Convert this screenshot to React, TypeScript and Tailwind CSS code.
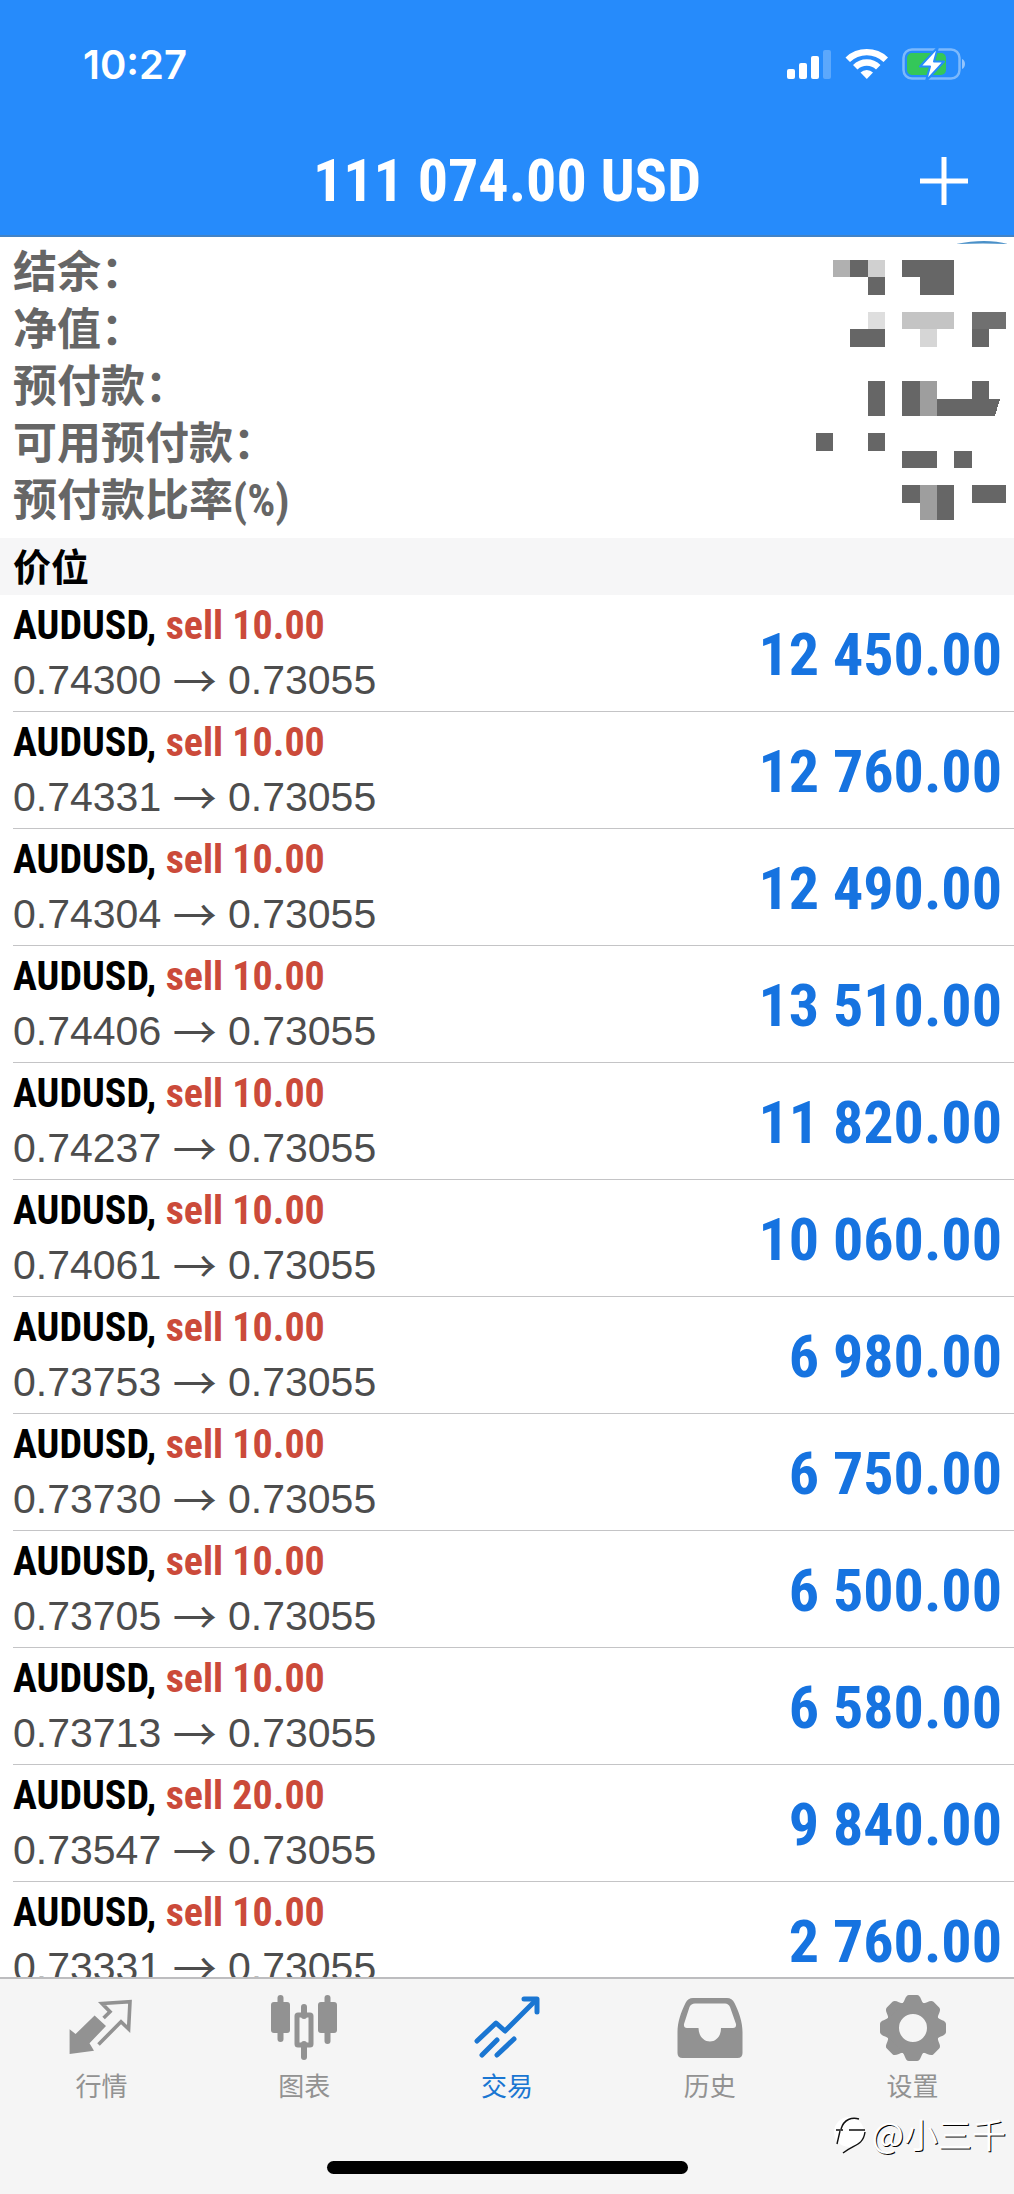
import React from "react";

const condensed = "font-['Roboto_Condensed','Liberation_Sans',sans-serif] font-bold";
const cjk = "font-['Noto_Sans_CJK_SC',sans-serif]";

const positions = [
  { open: "0.74300", lots: "10.00", profit: "12 450.00" },
  { open: "0.74331", lots: "10.00", profit: "12 760.00" },
  { open: "0.74304", lots: "10.00", profit: "12 490.00" },
  { open: "0.74406", lots: "10.00", profit: "13 510.00" },
  { open: "0.74237", lots: "10.00", profit: "11 820.00" },
  { open: "0.74061", lots: "10.00", profit: "10 060.00" },
  { open: "0.73753", lots: "10.00", profit: "6 980.00" },
  { open: "0.73730", lots: "10.00", profit: "6 750.00" },
  { open: "0.73705", lots: "10.00", profit: "6 500.00" },
  { open: "0.73713", lots: "10.00", profit: "6 580.00" },
  { open: "0.73547", lots: "20.00", profit: "9 840.00" },
  { open: "0.73331", lots: "10.00", profit: "2 760.00" },
];

function StatusIcons() {
  return (
    <svg width="182" height="34" viewBox="0 0 182 34" aria-hidden="true">
      <g fill="#fff">
        <rect x="1" y="21" width="8" height="10" rx="2" />
        <rect x="13" y="15" width="8" height="16" rx="2" />
        <rect x="25" y="8" width="8" height="23" rx="2" />
        <rect x="37" y="2" width="8" height="29" rx="2" opacity=".25" />
        <path d="M59.500 9.500A30.500 30.500 0 0 1 102 9.500L97.500 14A24 24 0 0 0 64 14Z" />
        <path d="M67 17A19.500 19.500 0 0 1 94.500 17L90 21.500A13.500 13.500 0 0 0 71.500 21.500Z" />
        <path d="M74.500 24.500A9 9 0 0 1 87 24.500L80.800 31Z" />
      </g>
      <rect x="117.500" y="1.500" width="56" height="29" rx="8.500" fill="none" stroke="#fff" strokeOpacity=".4" strokeWidth="2.500" />
      <path d="M176 11c4 1.500 4 8.500 0 10Z" fill="#fff" opacity=".5" />
      <rect x="121" y="5" width="39" height="22" rx="5" fill="#34c759" />
      <path d="M152 -1L134 18.500H144L140 33L158 13.500H148L152 -1Z" fill="#fff" stroke="#268bfb" strokeWidth="2" strokeLinejoin="round" />
    </svg>
  );
}

/* Pixelated cover over the private account figures. */
function Mosaic() {
  const cells: [number, number, number, number, string][] = [
    [17, 0, 17, 17, "#b0b0b0"], [34, 0, 18, 17, "#666"], [52, 0, 17, 17, "#d0d0d0"], [52, 17, 17, 18, "#666"],
    [86, 0, 52, 17, "#666"], [104, 17, 34, 18, "#666"],
    [52, 52, 17, 17, "#dedede"], [34, 69, 35, 18, "#666"], [86, 52, 52, 17, "#c4c4c4"], [104, 69, 17, 18, "#d6d6d6"],
    [156, 52, 34, 17, "#707070"], [156, 69, 17, 18, "#666"],
    [52, 121, 17, 35, "#666"], [86, 121, 18, 35, "#666"], [104, 121, 17, 35, "#9e9e9e"], [156, 121, 17, 18, "#666"],
    [0, 173, 17, 18, "#666"], [52, 173, 17, 18, "#666"], [86, 191, 35, 17, "#666"], [138, 191, 18, 17, "#666"],
    [86, 225, 18, 18, "#666"], [104, 225, 17, 35, "#9e9e9e"], [121, 225, 17, 35, "#666"], [156, 225, 34, 18, "#666"],
  ];
  return (
    <svg width="190" height="260" viewBox="0 0 190 260" shapeRendering="crispEdges" aria-hidden="true">
      {cells.map(([x, y, w, h, fill], i) => (
        <rect key={i} x={x} y={y} width={w} height={h} fill={fill} />
      ))}
      <path d="M121 139H184L179 156H121Z" fill="#666" />
    </svg>
  );
}

function QuotesIcon() {
  return (
    <svg width="66" height="66" viewBox="0 0 66 66" aria-hidden="true">
      <path d="M26.600 20.500L38 31L21.500 48.300L26 55.700L1.600 59V34.300L7.600 39Z" fill="#929292" />
      <path d="M35.600 23L42 16.700L34 8.500L62 6.700L60.600 34L53 26.700L30.500 49.500" fill="none" stroke="#929292" strokeWidth="3.600" />
    </svg>
  );
}

function ChartIcon() {
  return (
    <svg width="66" height="66" viewBox="0 0 66 66" fill="#929292" aria-hidden="true">
      <rect x="6.500" y="0" width="6" height="47" rx="3" />
      <rect x="0" y="7" width="19" height="31" rx="3" />
      <rect x="30" y="9" width="6" height="15" rx="3" />
      <rect x="30" y="46" width="6" height="19" rx="3" />
      <rect x="26" y="20" width="14" height="30" rx="1" fill="none" stroke="#929292" strokeWidth="5" />
      <rect x="53.500" y="0" width="6" height="49" rx="3" />
      <rect x="47" y="7" width="19" height="31" rx="3" />
    </svg>
  );
}

function TradeIcon() {
  return (
    <svg width="66" height="66" viewBox="0 0 66 66" fill="none" stroke="#1a76d2" strokeWidth="5" strokeLinecap="round" strokeLinejoin="round" aria-hidden="true">
      <path d="M3 46L22 28L31 36L62 5" />
      <path d="M50 4H63V17" />
      <path d="M8 60L23 45M23 60L40 44" />
    </svg>
  );
}

function HistoryIcon() {
  return (
    <svg width="66" height="66" viewBox="0 0 66 66" aria-hidden="true">
      <path fillRule="evenodd" fill="#929292" d="M16 3H50Q55 3 57.500 8C62 17 65.500 27 65.500 37V58Q65.500 63 60.500 63H5.500Q.500 63 .500 58V37C.500 27 4 17 8.500 8Q11 3 16 3ZM18 8.500Q14 8.500 12.500 12L7 29Q6.500 33 10 33H21.500C22 51 44 51 44 33H56Q59.500 33 59 29L53 12Q51.500 8.500 48 8.500Z" />
    </svg>
  );
}

function SettingsIcon() {
  return (
    <svg width="66" height="66" viewBox="-33 -33 66 66" aria-hidden="true">
      <g fill="#929292">
        <circle r="20.500" fill="none" stroke="#929292" strokeWidth="13" />
        {[0, 45, 90, 135, 180, 225, 270, 315].map((a) => (
          <path key={a} transform={`rotate(${a})`} d="M-11 -24C-8 -26 -8 -33 -4 -33H4C8 -33 8 -26 11 -24Z" />
        ))}
      </g>
    </svg>
  );
}

const tabs = [
  { label: "行情", Icon: QuotesIcon, active: false },
  { label: "图表", Icon: ChartIcon, active: false },
  { label: "交易", Icon: TradeIcon, active: true },
  { label: "历史", Icon: HistoryIcon, active: false },
  { label: "设置", Icon: SettingsIcon, active: false },
];

export default function App() {
  return (
    <div className="flex h-screen flex-col overflow-hidden bg-white">
      <header className="shrink-0 border-b-2 border-[#4283c6] bg-[#268bfb] text-white">
        <div className="flex h-[130px] items-center justify-between pr-[46px] pl-[83px]">
          <time className="font-['Inter',sans-serif] text-[40px] leading-none font-semibold">10:27</time>
          <StatusIcons />
        </div>
        <div className="grid h-[105px] grid-cols-[1fr_auto_1fr] items-center px-[46px] pb-1">
          <h1 className={`col-start-2 text-[60px] leading-none ${condensed}`}>111 074.00 USD</h1>
          <button type="button" aria-label="新订单" className="justify-self-end">
            <svg width="48" height="48" viewBox="0 0 48 48" stroke="#fff" strokeWidth="5" aria-hidden="true">
              <path d="M24 0V48M0 24H48" />
            </svg>
          </button>
        </div>
      </header>

      <section className="relative flex shrink-0 items-start justify-between py-2 pr-2 pl-[13px]">
        <svg className="absolute top-1 right-1" width="54" height="4" viewBox="0 0 54 4" aria-hidden="true">
          <path d="M0 3Q30 -3 52 3Q28 2 0 3Z" fill="#4a90c8" />
        </svg>
        <ul className="font-['Roboto_Condensed','Noto_Sans_CJK_SC',sans-serif] text-[44px] leading-[57px] font-bold text-[#666]">
          <li>结余：</li>
          <li>净值：</li>
          <li>预付款：</li>
          <li>可用预付款：</li>
          <li>预付款比率(%)</li>
        </ul>
        <div className="pt-[15px]"><Mosaic /></div>
      </section>

      <h2 className={`h-[57px] shrink-0 bg-[#f6f6f7] pl-[13px] text-[38px] leading-[54px] font-bold text-black ${cjk}`}>价位</h2>

      <ul className="min-h-0 flex-1 overflow-hidden pl-[13px]">
        {positions.map((p) => (
          <li key={p.open} className="flex h-[117px] items-center justify-between border-b border-[#c4c4c6] pr-3">
            <div>
              <p className={`text-[40px] leading-[54px] text-black ${condensed}`}>
                AUDUSD, <span className="text-[#cb4a3a]">sell {p.lots}</span>
              </p>
              <p className="h-[54px] font-['Liberation_Sans',sans-serif] text-[41px] leading-[54px] text-[#4d4d4d]">
                {p.open} <span className={`inline-block pb-2 align-middle text-[44px] leading-none ${cjk}`}>→</span> 0.73055
              </p>
            </div>
            <strong className={`pt-1 text-[60px] leading-none text-[#1673e0] ${condensed}`}>{p.profit}</strong>
          </li>
        ))}
      </ul>

      <footer className="relative shrink-0 border-t-2 border-[#bdbdbf] bg-[#f5f5f5] pb-5">
        <nav className="grid grid-cols-5 pt-4">
          {tabs.map(({ label, Icon, active }) => (
            <button key={label} type="button" className={`flex flex-col items-center gap-2 ${active ? "text-[#1a76d2]" : "text-[#929292]"}`}>
              <Icon />
              <span className={`text-[26px] leading-8 ${cjk}`}>{label}</span>
            </button>
          ))}
        </nav>
        <div className="mx-auto mt-[60px] h-[13px] w-[361px] rounded-full bg-black" />
        <p className={`absolute right-2 bottom-10 flex items-center gap-1 text-[34px] leading-none text-white [text-shadow:1px_1px_0_#000] ${cjk}`}>
          <svg width="34" height="40" viewBox="0 0 34 40" fill="none" aria-hidden="true">
            <circle cx="15" cy="18" r="15" fill="#fff" />
            <path d="M7 15C10 5 18 3 25 5M2 16H9M15 16H31M6 17L3 30M31 18C29 32 20 30 9 39" stroke="#111" strokeWidth="1.400" />
          </svg>
          @小三千
        </p>
      </footer>
    </div>
  );
}
